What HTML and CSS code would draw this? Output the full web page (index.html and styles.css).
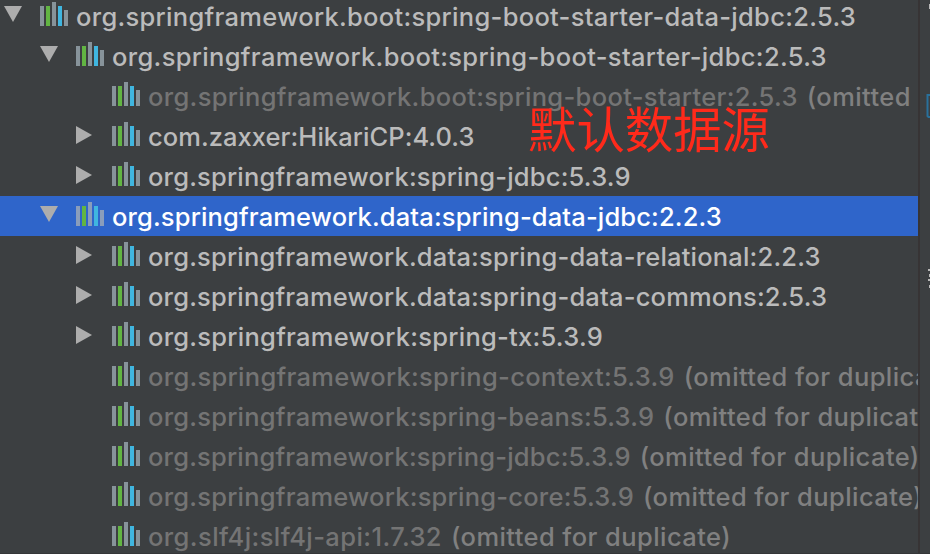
FILE: index.html
```html
<!DOCTYPE html>
<html lang="zh">
<head>
<meta charset="utf-8">
<title>Dependencies</title>
<link rel="stylesheet" href="styles.css">
</head>
<body>
<svg width="0" height="0" class="defs">
  <symbol id="lib" viewBox="0 0 28 24">
    <path class="bar" d="M0 4h4v20H0zM12 0h4v24h-4zM24 8h4v16h-4z"/>
    <path fill="#62b543" d="M6 4h4v20H6z"/>
    <path fill="#40b6e0" d="M18 4h4v20h-4z"/>
  </symbol>
  <symbol id="open" viewBox="0 0 18 18"><path d="M0 0h18L9 16z"/></symbol>
  <symbol id="closed" viewBox="0 0 18 18"><path d="M0 0v18l16-9z"/></symbol>
</svg>
<div class="window">
  <ul class="tree">
    <li class="row l0"><svg class="arrow"><use href="#open"/></svg><svg class="lib"><use href="#lib"/></svg><span class="name">org.springframework.boot:spring-boot-starter-data-jdbc:2.5.3</span></li>
    <li class="row l1"><svg class="arrow"><use href="#open"/></svg><svg class="lib"><use href="#lib"/></svg><span class="name">org.springframework.boot:spring-boot-starter-jdbc:2.5.3</span></li>
    <li class="row l2 omitted"><svg class="arrow"></svg><svg class="lib"><use href="#lib"/></svg><span class="name">org.springframework.boot:spring-boot-starter:2.5.3</span><span class="note">(omitted</span></li>
    <li class="row l2"><svg class="arrow"><use href="#closed"/></svg><svg class="lib"><use href="#lib"/></svg><span class="name">com.zaxxer:HikariCP:4.0.3</span></li>
    <li class="row l2"><svg class="arrow"><use href="#closed"/></svg><svg class="lib"><use href="#lib"/></svg><span class="name">org.springframework:spring-jdbc:5.3.9</span></li>
    <li class="row l1 selected"><svg class="arrow"><use href="#open"/></svg><svg class="lib"><use href="#lib"/></svg><span class="name">org.springframework.data:spring-data-jdbc:2.2.3</span></li>
    <li class="row l2"><svg class="arrow"><use href="#closed"/></svg><svg class="lib"><use href="#lib"/></svg><span class="name">org.springframework.data:spring-data-relational:2.2.3</span></li>
    <li class="row l2"><svg class="arrow"><use href="#closed"/></svg><svg class="lib"><use href="#lib"/></svg><span class="name">org.springframework.data:spring-data-commons:2.5.3</span></li>
    <li class="row l2"><svg class="arrow"><use href="#closed"/></svg><svg class="lib"><use href="#lib"/></svg><span class="name">org.springframework:spring-tx:5.3.9</span></li>
    <li class="row l2 omitted"><svg class="arrow"></svg><svg class="lib"><use href="#lib"/></svg><span class="name">org.springframework:spring-context:5.3.9</span><span class="note">(omitted for duplicate)</span></li>
    <li class="row l2 omitted"><svg class="arrow"></svg><svg class="lib"><use href="#lib"/></svg><span class="name">org.springframework:spring-beans:5.3.9</span><span class="note">(omitted for duplicate)</span></li>
    <li class="row l2 omitted"><svg class="arrow"></svg><svg class="lib"><use href="#lib"/></svg><span class="name">org.springframework:spring-jdbc:5.3.9</span><span class="note">(omitted for duplicate)</span></li>
    <li class="row l2 omitted"><svg class="arrow"></svg><svg class="lib"><use href="#lib"/></svg><span class="name">org.springframework:spring-core:5.3.9</span><span class="note">(omitted for duplicate)</span></li>
    <li class="row l2 omitted"><svg class="arrow"></svg><svg class="lib"><use href="#lib"/></svg><span class="name">org.slf4j:slf4j-api:1.7.32</span><span class="note">(omitted for duplicate)</span></li>
  </ul>
  <div class="side">
    <svg width="10" height="554" viewBox="0 0 10 554">
      <path d="M10 95H7.500V116l1 1H10" fill="none" stroke="#29719b" stroke-width="2"/>
      <path d="M9 4h1v5H9zM8 269h2v2H8zM9 274h1v3H9zM8 279h2v2H8zM9 285h1v3H9z" fill="#b9b9b9"/>
    </svg>
  </div>
  <div class="annotation">默认数据源</div>
</div>
</body>
</html>
```
FILE: styles.css
```css
body {
  margin: 0;
  background: #3c3f41;
  font-family: Inter, "Liberation Sans", sans-serif;
}
.defs { position: absolute; }
.window {
  position: relative;
  display: flex;
  width: 930px;
  height: 554px;
  overflow: hidden;
  box-sizing: border-box;
  border-bottom: 1px solid #353638;
}
.tree {
  flex: 1;
  min-width: 0;
  margin: -4px 0 0;
  padding: 0;
  list-style: none;
  overflow: hidden;
}
.row {
  display: flex;
  align-items: flex-start;
  box-sizing: border-box;
  height: 40px;
  padding-left: 4px;
  color: #bbbbbb;
  font-size: 25.5px;
  font-weight: 500;
  line-height: 42px;
  letter-spacing: 0.19px;
  white-space: nowrap;
}
.l1 { padding-left: 40px; }
.l2 { padding-left: 76px; }
.arrow {
  flex: none;
  width: 18px;
  height: 18px;
  margin: 10px 18px 0 0;
  fill: #adadad;
}
.lib {
  flex: none;
  width: 28px;
  height: 24px;
  margin: 6px 8px 0 0;
  fill: #87939a;
}
.row:nth-child(1) { letter-spacing: 0.3px; }
.row:nth-child(2), .row:nth-child(3) { letter-spacing: 0.33px; }
.row:nth-child(4) { letter-spacing: 0.06px; }
.row:nth-child(6) { letter-spacing: 0.14px; }
.row:nth-child(9) { letter-spacing: 0.26px; }
.row:nth-child(10) { letter-spacing: 0.3px; }
.row:nth-child(11), .row:nth-child(13) { letter-spacing: 0.23px; }
.row:nth-child(14) { letter-spacing: 0.42px; }
.row .note {
  margin-left: 9px;
  color: #808080;
  letter-spacing: 0.42px;
}
.omitted .name { color: #747474; }
.selected { background: #2f65ca; color: #fff; }
.selected .lib { fill: #8a9dbb; }
.side {
  flex: none;
  width: 10px;
  border-left: 2px solid #373435;
}
.annotation {
  position: absolute;
  left: 528px;
  top: 92px;
  color: #ff2a1b;
  font: 48.4px/70px "Noto Sans CJK SC", sans-serif;
}
```
